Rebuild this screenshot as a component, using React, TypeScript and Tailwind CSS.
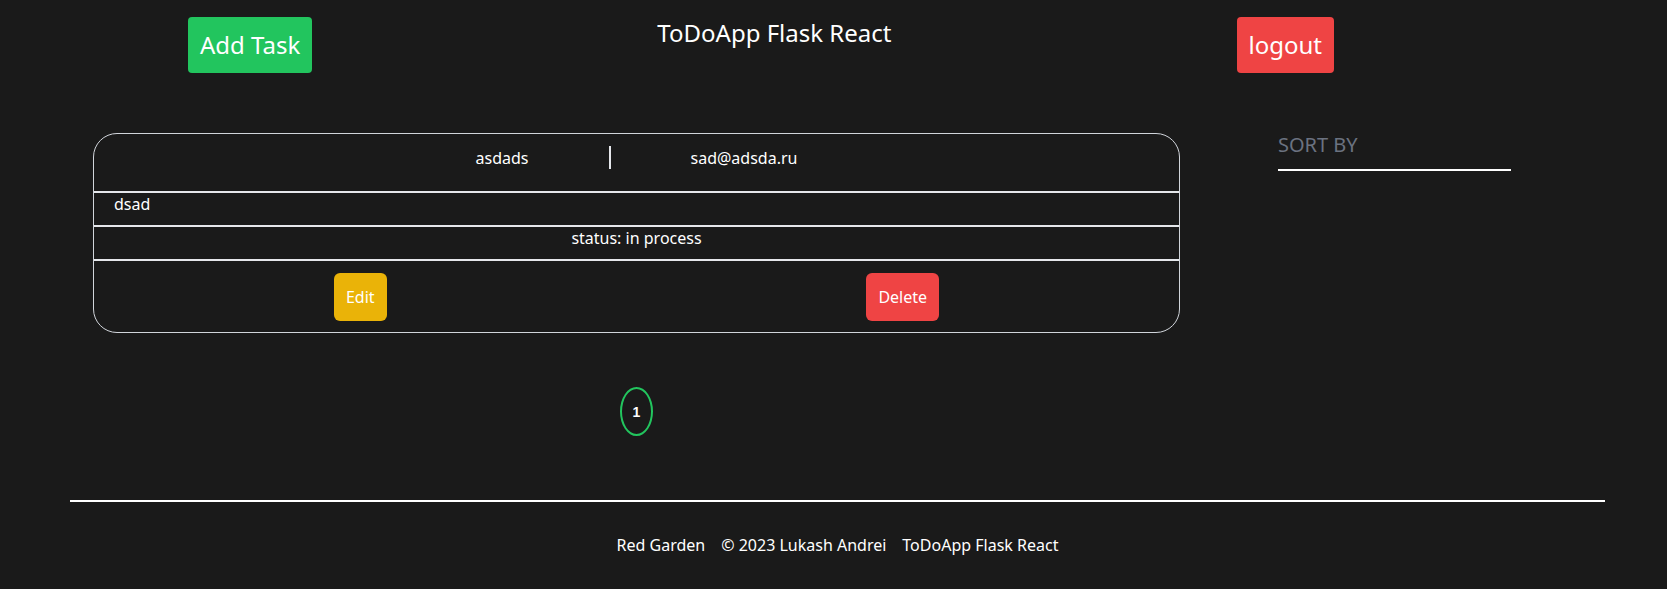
const tasks = [{ id: 1, username: 'asdads', email: 'sad@adsda.ru', text: 'dsad', status: 'in process' }];

function Header() {
  return (
    <header className="flex items-start pl-[188px] pr-[333px] pt-[17px]">
      <button type="button" className="rounded-[4px] bg-[#22c55e] px-3 py-3 text-2xl text-white">
        Add Task
      </button>
      <h1 className="flex-1 text-center text-2xl text-white">ToDoApp Flask React</h1>
      <button type="button" className="rounded-[4px] bg-[#ef4444] px-3 py-3 text-2xl text-white">
        logout
      </button>
    </header>
  );
}

function TaskCard({ task }: { task: (typeof tasks)[number] }) {
  return (
    <div className="overflow-hidden rounded-3xl border border-[#d1d5db] text-base text-white">
      <div className="flex h-[59px] justify-center border-b-2 border-[#e5e7eb] pt-3">
        <span className="leading-6">{task.username}</span>
        <span className="mx-20 h-[23px] w-[2px] bg-[#e5e7eb]" />
        <span className="leading-6">{task.email}</span>
      </div>
      <div className="border-b-2 border-[#e5e7eb] pb-[11px] pl-5 pt-[1px] leading-5">{task.text}</div>
      <div className="border-b-2 border-[#e5e7eb] pb-[11px] pt-[1px] text-center leading-5">status: {task.status}</div>
      <div className="flex h-[71px] items-center justify-around">
        <button type="button" className="rounded-md bg-[#eab308] px-3 py-3 text-white">
          Edit
        </button>
        <button type="button" className="rounded-md bg-[#ef4444] px-3 py-3 text-white">
          Delete
        </button>
      </div>
    </div>
  );
}

export default function App() {
  return (
    <div className="min-h-[589px] bg-[#1a1a1a] font-['Noto_Sans',sans-serif] text-white">
      <Header />

      <main className="mt-[58px] flex items-start pl-[93px]">
        <div className="w-[1087px] pt-[2px]">
          {tasks.map((t) => (
            <TaskCard key={t.id} task={t} />
          ))}
          <div className="mt-[54px] flex justify-center">
            <div className="flex h-[49px] w-[33px] items-center justify-center rounded-[50%] border-2 border-[#22c55e] font-['Liberation_Sans',Arial,sans-serif] text-sm font-bold">
              1
            </div>
          </div>
        </div>
        <div className="ml-[98px] w-[233px] border-b-2 border-white pb-[10px] text-xl text-[#6b7280]">SORT BY</div>
      </main>

      <footer className="ml-[70px] mt-[64px] w-[1535px] border-t-2 border-white pt-[31px]">
        <div className="flex justify-center gap-4 text-base">
          <span>Red Garden</span>
          <span>© 2023 Lukash Andrei</span>
          <span>ToDoApp Flask React</span>
        </div>
      </footer>
    </div>
  );
}
